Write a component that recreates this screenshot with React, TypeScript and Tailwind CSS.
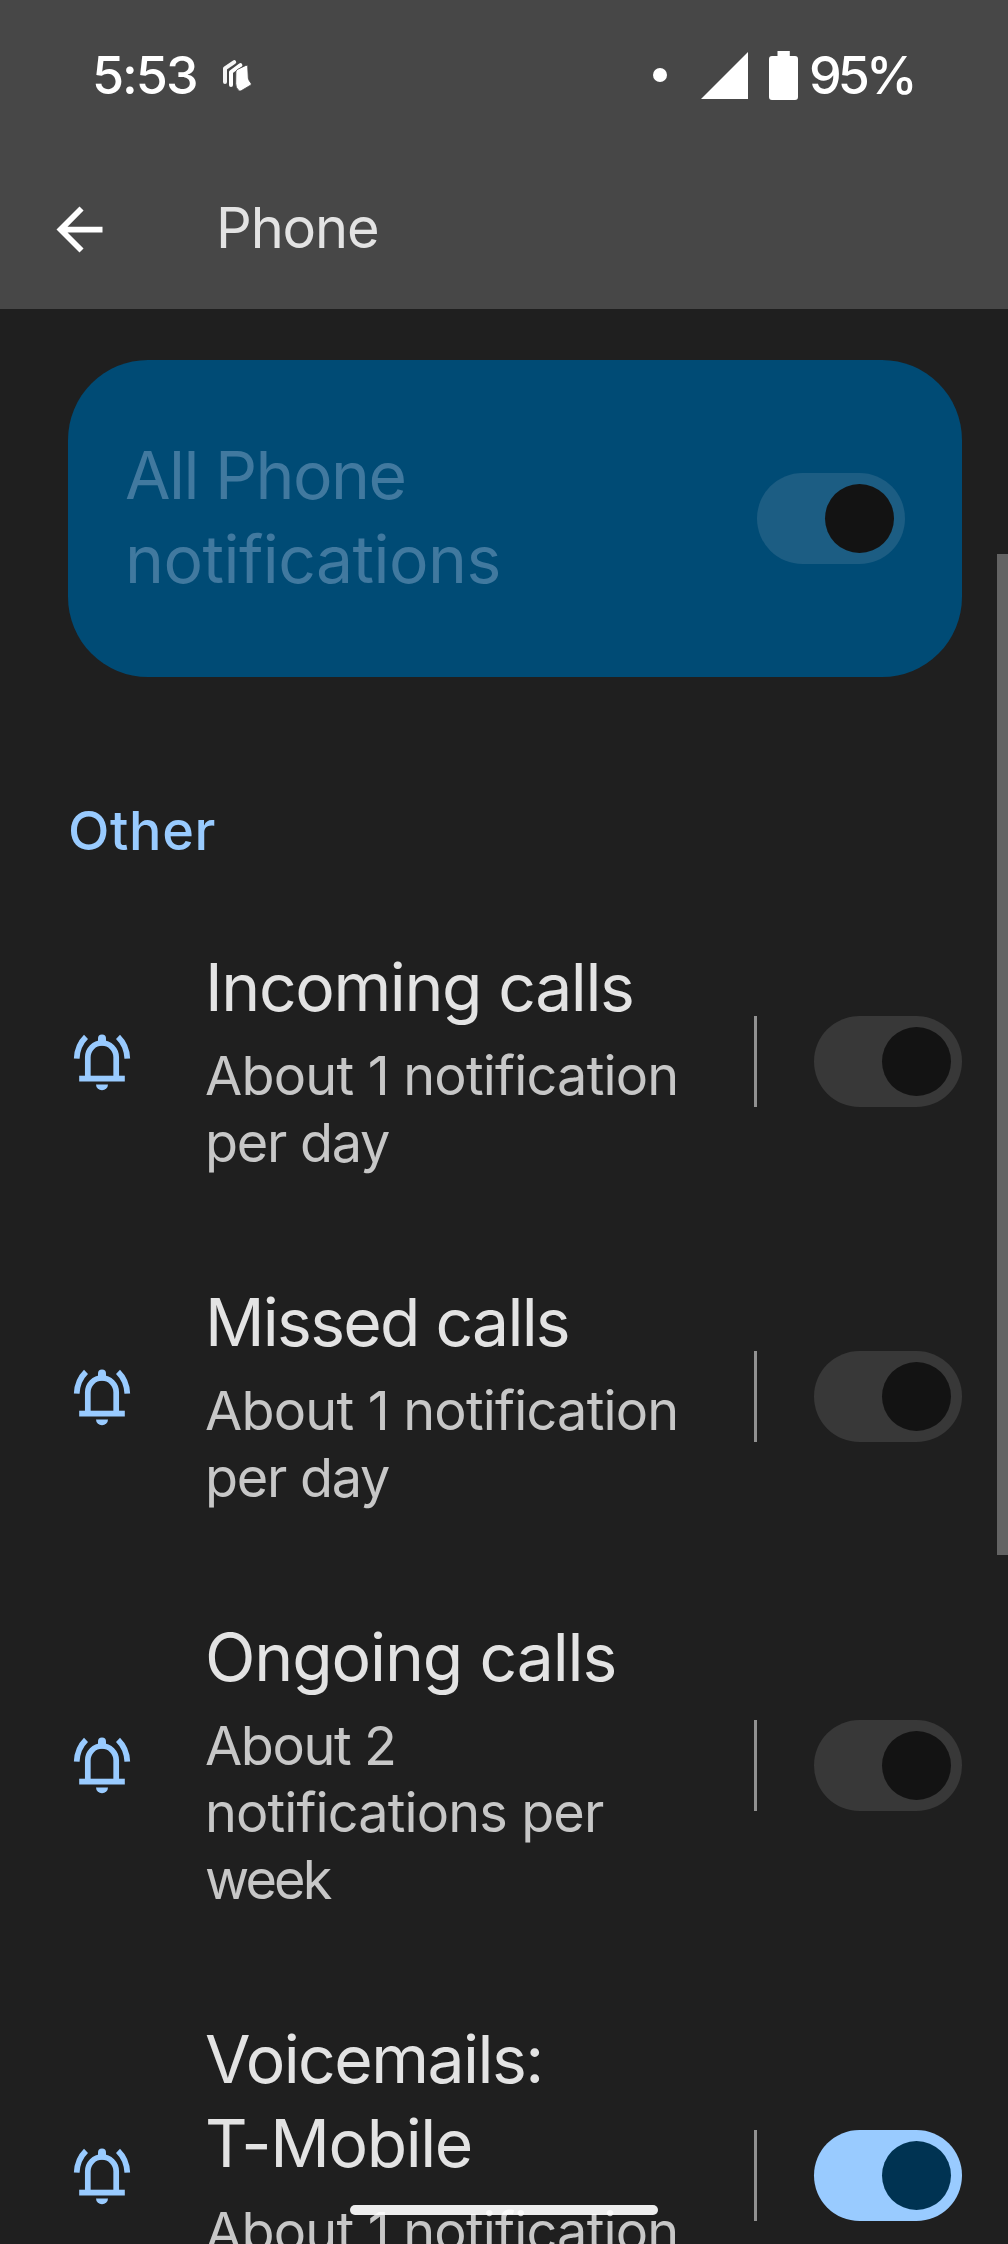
type Line = { text: string; tracking: string };

type Channel = {
  id: string;
  title: Line[];
  summary: Line[];
  enabled: boolean;
};

const channels: Channel[] = [
  {
    id: "incoming",
    title: [{ text: "Incoming calls", tracking: "tracking-[-1.4px]" }],
    summary: [
      { text: "About 1 notification", tracking: "tracking-[-0.8px]" },
      { text: "per day", tracking: "tracking-[-1.28px]" },
    ],
    enabled: false,
  },
  {
    id: "missed",
    title: [{ text: "Missed calls", tracking: "tracking-[-1.75px]" }],
    summary: [
      { text: "About 1 notification", tracking: "tracking-[-0.8px]" },
      { text: "per day", tracking: "tracking-[-1.28px]" },
    ],
    enabled: false,
  },
  {
    id: "ongoing",
    title: [{ text: "Ongoing calls", tracking: "tracking-[-1.12px]" }],
    summary: [
      { text: "About 2", tracking: "tracking-[-1.41px]" },
      { text: "notifications per", tracking: "tracking-[-0.88px]" },
      { text: "week", tracking: "tracking-[-2.8px]" },
    ],
    enabled: false,
  },
  {
    id: "voicemail",
    title: [
      { text: "Voicemails:", tracking: "tracking-[-1.54px]" },
      { text: "T-Mobile", tracking: "tracking-[-1.4px]" },
    ],
    summary: [
      { text: "About 1 notification", tracking: "tracking-[-0.8px]" },
      { text: "per day", tracking: "tracking-[-1.28px]" },
    ],
    enabled: true,
  },
];

function Toggle({ track, knob }: { track: string; knob: string }) {
  return (
    <span
      className={`flex h-[91px] w-[148px] shrink-0 items-center justify-end rounded-full pr-[11px] ${track}`}
    >
      <span className={`size-[69px] rounded-full ${knob}`} />
    </span>
  );
}

function BellIcon() {
  return (
    <svg viewBox="0 1.5 80 80" className="size-20 shrink-0" fill="none">
      <g stroke="#99cbff" strokeWidth="5.7">
        <path d="M16.7 38.2Q17.2 25 26 16.4" />
        <path d="M67.3 38.2Q66.8 25 58 16.4" />
        <path d="M27.8 57V36.7a14.2 14.2 0 0 1 28.4 0V57" />
      </g>
      <g fill="#99cbff">
        <rect x="38" y="14" width="8" height="11" rx="4" />
        <rect x="19.2" y="55.2" width="45.6" height="5.8" />
        <path d="M36 64h12a6 5.8 0 0 1-12 0z" />
      </g>
    </svg>
  );
}

function PagesIcon() {
  return (
    <svg viewBox="0 0 32 36" className="h-9 w-8" fill="none">
      <g stroke="#fff" strokeWidth="4" strokeLinecap="round" strokeLinejoin="round">
        <path d="M4 24V10.4L13.200 4.200" opacity=".95" />
        <path d="M10 27V14L19.4 7.200" />
      </g>
      <path
        d="M14.900 13.800q.5-1.800 2-2.600l8-3.800q1.600-.4 1.800 1.200l.6 11.400q.2 1.500 1 2.800l1.800 2.600q.4 1-.6 1.800l-9.400 5.600q-1.400.7-2.400-.4-3-2.600-3-7z"
        fill="#fff"
        stroke="#474747"
        strokeWidth=".8"
      />
    </svg>
  );
}

function StatusBar() {
  return (
    <div className="flex h-[150px] items-center px-[92px] text-[52px] leading-none font-medium text-white">
      <span className="pt-0.5 tracking-[-2.02px]">5:53</span>
      <span className="ml-6 pt-px">
        <PagesIcon />
      </span>
      <span className="ml-auto size-[14px] rounded-full bg-white" />
      <svg viewBox="0 0 47 47" className="ml-[34px] size-[47px]" fill="#fff">
        <path d="M47 0V47H0z" />
      </svg>
      <svg viewBox="0 0 29 49" className="ml-[21px] h-[49px] w-[29px]" fill="#fff">
        <path d="M8.5 0h12.3v5H26q3 0 3 3v38q0 3-3 3H3q-3 0-3-3V8q0-3 3-3h5.500z" />
      </svg>
      <span className="ml-[11px] w-[107px] pt-0.5 tracking-[-3.95px] whitespace-nowrap">95%</span>
    </div>
  );
}

function AppBar() {
  return (
    <div className="flex h-[159px] items-center pl-[45px]">
      <svg viewBox="0 0 24 24" className="size-[69px]" fill="#fff">
        <path d="M20 11H7.830l5.590-5.590L12 4l-8 8 8 8 1.410-1.410L7.830 13H20z" />
      </svg>
      <h1 className="ml-[102px] pb-[3px] text-[56px] leading-none tracking-[-1.14px] text-[#e3e3e3]">
        Phone
      </h1>
    </div>
  );
}

function ChannelRow({ channel }: { channel: Channel }) {
  return (
    <li className="flex items-center pr-[46px] pl-[60px]">
      <BellIcon />
      <div className="ml-[65px] flex flex-1 flex-col gap-[13px] pt-[51px] pb-[53px] whitespace-nowrap">
        <div className="text-[66px] leading-[84px] text-[#e3e3e3]">
          {channel.title.map((line) => (
            <div key={line.text} className={line.tracking}>
              {line.text}
            </div>
          ))}
        </div>
        <div className="text-[54px] leading-[67px] text-[#c7c7c7]">
          {channel.summary.map((line) => (
            <div key={line.text} className={line.tracking}>
              {line.text}
            </div>
          ))}
        </div>
      </div>
      <span className="mr-[57px] h-[91px] w-[3px] bg-[#919191]" />
      <Toggle
        track={channel.enabled ? "bg-[#99cbff]" : "bg-[#383838]"}
        knob={channel.enabled ? "bg-[#003352]" : "bg-[#131313]"}
      />
    </li>
  );
}

export default function App() {
  return (
    <div className="relative h-[2244px] w-[1008px] overflow-hidden bg-[#1f1f1f] font-[Inter,sans-serif]">
      <header className="bg-[#474747]">
        <StatusBar />
        <AppBar />
      </header>

      <main>
        <section className="mt-[51px] mr-[46px] ml-[68px] flex h-[317px] items-center justify-between rounded-[80px] bg-[#004b75] px-[57px]">
          <div className="pb-[3px] text-[66px] leading-[84px] text-[#41799f]">
            <div className="tracking-[-1.54px]">All Phone</div>
            <div className="tracking-[-0.55px]">notifications</div>
          </div>
          <Toggle track="bg-[#1c5d83]" knob="bg-[#131313]" />
        </section>

        <h2 className="h-[217px] pt-[121px] pl-[68px] text-[54px] leading-[66px] font-medium tracking-[0.62px] text-[#99cbff]">
          Other
        </h2>

        <ul>
          {channels.map((channel) => (
            <ChannelRow key={channel.id} channel={channel} />
          ))}
        </ul>
      </main>

      <div className="absolute top-[554px] right-0 h-[1001px] w-[11px] bg-[#636363]" />
      <div className="absolute bottom-[29px] left-[350px] h-[10px] w-[308px] rounded-full bg-white/92" />
    </div>
  );
}
